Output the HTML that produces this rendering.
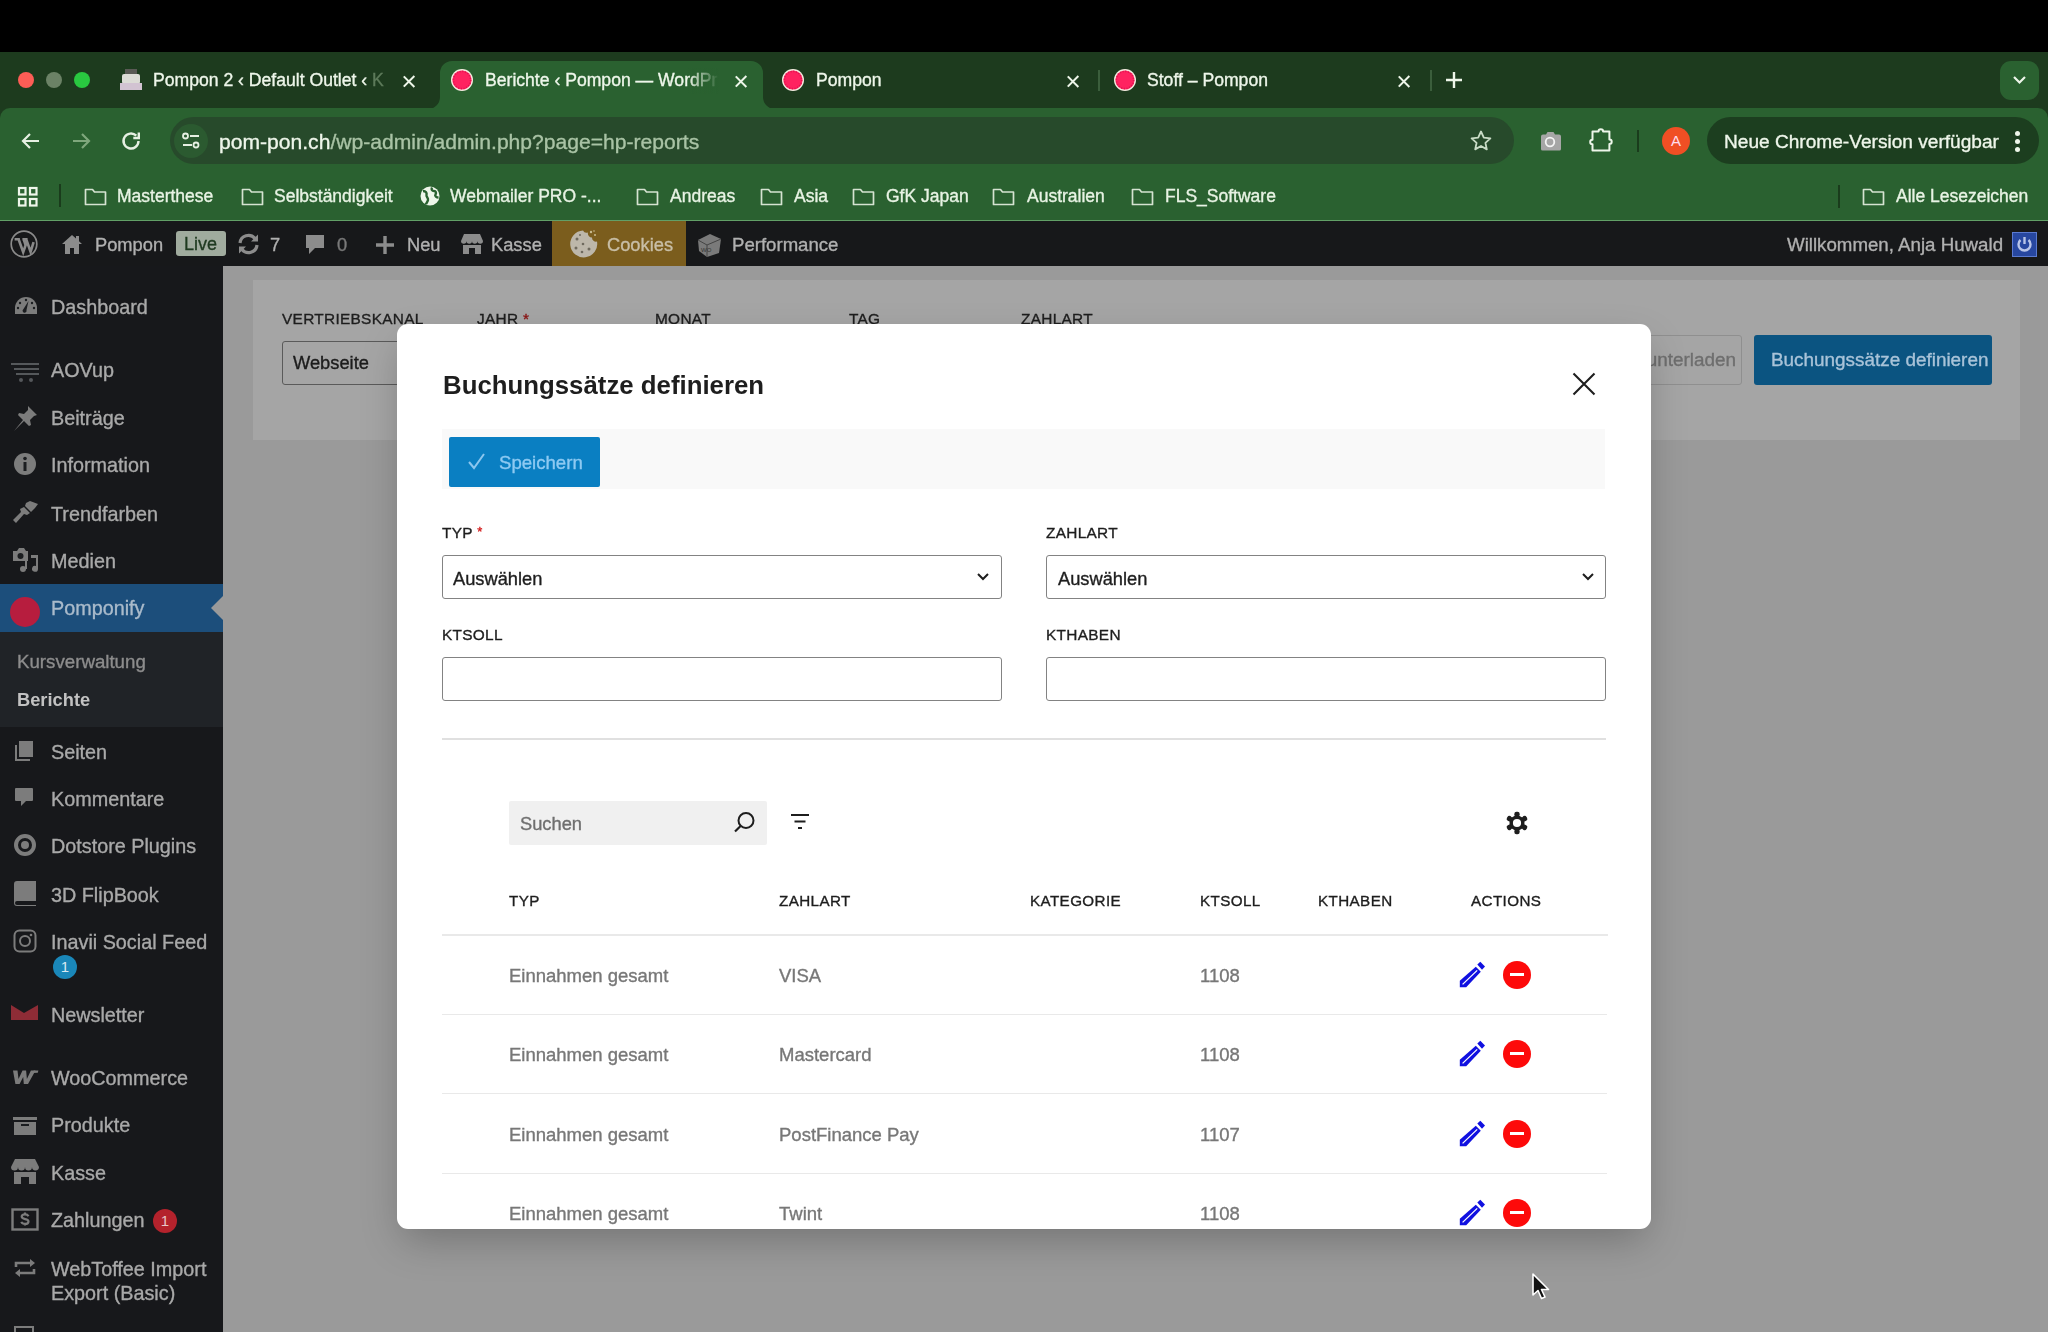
<!DOCTYPE html>
<html><head><meta charset="utf-8">
<style>
*{margin:0;padding:0;box-sizing:border-box}
html,body{width:2048px;height:1332px;overflow:hidden;background:#000;font-family:"Liberation Sans",sans-serif}
.a{position:absolute}
.t{position:absolute;white-space:nowrap;line-height:1;will-change:transform;-webkit-text-stroke:0.35px currentColor}
#topbar{left:0;top:0;width:2048px;height:52px;background:#000}
#tabs{left:0;top:52px;width:2048px;height:75px;background:#1d3b1e}
#toolbar{left:0;top:108px;width:2048px;height:112px;background:#2a6130;border-radius:10px 10px 0 0}
#bmline{left:0;top:219.5px;width:2048px;height:1.5px;background:#62a067}
#adminbar{left:0;top:221px;width:2048px;height:45px;background:#17181a}
#sidebar{left:0;top:266px;width:223px;height:1066px;background:#17181b}
#content{left:223px;top:266px;width:1825px;height:1066px;background:#9a9a9a}
.dot{position:absolute;width:16px;height:16px;border-radius:50%}
.tabtxt{color:#eef6ea;font-size:17.6px}
.close{position:absolute;width:12px;height:12px}
.close:before,.close:after{content:"";position:absolute;left:4.8px;top:-1.5px;width:2.4px;height:15px;background:#eef6ea;transform:rotate(45deg)}
.close:after{transform:rotate(-45deg)}
.fav{position:absolute;width:22px;height:22px;border-radius:50%;background:#ee2d55;border:2px solid #f7d2da}
.ab{color:#b0b0b0;font-size:18.3px}
.sb{color:#a9a9a9;font-size:19.8px}
.lbl{font-size:15.4px;color:#1e1e1e;letter-spacing:0.3px}
.sel{border:1.8px solid #838383;border-radius:3px;background:#fff}
.th{font-size:15.2px;color:#1e1e1e;letter-spacing:0.4px}
.td{font-size:18.5px;color:#777}
.bm{color:#e8f3e4;font-size:17.5px}
.folder{position:absolute;width:20px;height:16px;border:1.6px solid #d9e6d5;border-radius:2px}
.folder:before{content:"";position:absolute;left:-1.6px;top:-5px;width:8px;height:5px;border:1.6px solid #d9e6d5;border-bottom:none;border-radius:2px 2px 0 0}
</style></head><body>
<div id="topbar" class="a"></div>
<div id="tabs" class="a"></div>
<!-- traffic lights -->
<div class="dot" style="left:18px;top:72px;background:#fd5d56"></div>
<div class="dot" style="left:46px;top:72px;background:#6b8266"></div>
<div class="dot" style="left:74px;top:72px;background:#29c840"></div>
<!-- tab 1 -->
<div class="a" style="left:120px;top:69px;width:22px;height:22px">
 <div class="a" style="left:5px;top:0;width:12px;height:6px;background:#5a5a55"></div>
 <div class="a" style="left:2px;top:5px;width:18px;height:10px;background:#dcdcd6;border-radius:2px"></div>
 <div class="a" style="left:0;top:14px;width:22px;height:7px;background:#d2c3d2"></div>
</div>
<div class="t tabtxt" style="left:153px;top:72px">Pompon 2 ‹ Default Outlet ‹ <span style="color:#5d7a5a">K</span></div>
<div class="close" style="left:403px;top:75px"></div>
<!-- active tab -->
<svg class="a" style="left:428px;top:61px" width="347" height="48" viewBox="0 0 347 48"><path d="M0 48a12 12 0 0 0 12-12V12A12 12 0 0 1 24 0h299a12 12 0 0 1 12 12v24a12 12 0 0 0 12 12z" fill="#2a6130"/></svg>
<svg class="a" style="left:450px;top:68px" width="24" height="24" viewBox="0 0 24 24"><circle cx="12" cy="12" r="11" fill="#f5ebe0"/><circle cx="12" cy="12" r="9.6" fill="#ff2260"/><circle cx="12" cy="12" r="8.6" fill="none" stroke="#e01550" stroke-width="1.6" stroke-dasharray="1.2 1.5"/></svg>
<div class="t tabtxt" style="left:485px;top:72px">Berichte ‹ Pompon — WordPr</div>
<div class="a" style="left:688px;top:68px;width:36px;height:26px;background:linear-gradient(to right,rgba(42,97,48,0),#2a6130 85%)"></div>
<div class="close" style="left:735px;top:75px"></div>
<!-- tab 3 -->
<svg class="a" style="left:781px;top:68px" width="24" height="24" viewBox="0 0 24 24"><circle cx="12" cy="12" r="11" fill="#f5ebe0"/><circle cx="12" cy="12" r="9.6" fill="#ff2260"/><circle cx="12" cy="12" r="8.6" fill="none" stroke="#e01550" stroke-width="1.6" stroke-dasharray="1.2 1.5"/></svg>
<div class="t tabtxt" style="left:816px;top:72px">Pompon</div>
<div class="close" style="left:1067px;top:75px"></div>
<div class="a" style="left:1098px;top:70px;width:2px;height:21px;background:#3b5e3c"></div>
<!-- tab 4 -->
<svg class="a" style="left:1113px;top:68px" width="24" height="24" viewBox="0 0 24 24"><circle cx="12" cy="12" r="11" fill="#f5ebe0"/><circle cx="12" cy="12" r="9.6" fill="#ff2260"/><circle cx="12" cy="12" r="8.6" fill="none" stroke="#e01550" stroke-width="1.6" stroke-dasharray="1.2 1.5"/></svg>
<div class="t tabtxt" style="left:1147px;top:72px">Stoff – Pompon</div>
<div class="close" style="left:1398px;top:75px"></div>
<div class="a" style="left:1430px;top:70px;width:2px;height:21px;background:#3b5e3c"></div>
<svg class="a" style="left:1445px;top:71px" width="18" height="18" viewBox="0 0 18 18"><path d="M9 1v16M1 9h16" stroke="#eef6ea" stroke-width="2.4"/></svg>
<div class="a" style="left:2000px;top:61px;width:39px;height:39px;border-radius:11px;background:#2a6130"></div><svg class="a" style="left:2012px;top:75px" width="15" height="10" viewBox="0 0 15 10"><path d="M2 2l5.5 5.5L13 2" fill="none" stroke="#eef6ea" stroke-width="2.2"/></svg>


<div id="toolbar" class="a"></div>
<div id="bmline" class="a"></div>
<!-- nav icons -->
<svg class="a" style="left:19px;top:129px" width="24" height="24" viewBox="0 0 24 24"><path d="M20 12H5M11 5l-7 7 7 7" fill="none" stroke="#e6f0e2" stroke-width="2.2"/></svg>
<svg class="a" style="left:69px;top:129px" width="24" height="24" viewBox="0 0 24 24"><path d="M4 12h15M13 5l7 7-7 7" fill="none" stroke="#7fa77c" stroke-width="2.2"/></svg>
<svg class="a" style="left:119px;top:129px" width="24" height="24" viewBox="0 0 24 24"><path d="M19.5 12a7.5 7.5 0 1 1-2.2-5.3" fill="none" stroke="#e6f0e2" stroke-width="2.4"/><path d="M19.8 3.5v5.5h-5.5" fill="none" stroke="#e6f0e2" stroke-width="2.4"/></svg>
<!-- url pill -->
<div class="a" style="left:170px;top:117px;width:1344px;height:47px;border-radius:24px;background:#274a2b"></div>
<div class="a" style="left:174px;top:124px;width:34px;height:34px;border-radius:50%;background:#2b5a30"></div>
<svg class="a" style="left:180px;top:130px" width="22" height="22" viewBox="0 0 22 22"><circle cx="5.5" cy="6" r="2.5" fill="none" stroke="#e6f0e2" stroke-width="1.8"/><path d="M10 6h9M3 15h9" stroke="#e6f0e2" stroke-width="1.8"/><circle cx="16" cy="15" r="2.5" fill="none" stroke="#e6f0e2" stroke-width="1.8"/></svg>
<div class="t" style="left:219px;top:131px;font-size:21.1px;color:#eef6ea">pom-pon.ch<span style="color:#a9c3a5">/wp-admin/admin.php?page=hp-reports</span></div>
<svg class="a" style="left:1469px;top:129px" width="24" height="24" viewBox="0 0 24 24"><path d="M12 2.5l2.8 6.1 6.6.7-5 4.5 1.4 6.6L12 17l-5.8 3.4 1.4-6.6-5-4.5 6.6-.7z" fill="none" stroke="#c9dcc6" stroke-width="1.8" stroke-linejoin="round"/></svg>
<!-- camera -->
<svg class="a" style="left:1540px;top:131px" width="22" height="20" viewBox="0 0 22 20"><path d="M1 5.5a2 2 0 0 1 2-2h3l1.5-2.5h6L15 3.5h4a2 2 0 0 1 2 2V18a1.5 1.5 0 0 1-1.5 1.5h-17A1.5 1.5 0 0 1 1 18z" fill="#a6a6a6"/><circle cx="10" cy="11" r="4.3" fill="none" stroke="#f4f4f4" stroke-width="1.8"/></svg>
<!-- puzzle -->
<svg class="a" style="left:1589px;top:127px" width="26" height="26" viewBox="0 0 26 26"><path d="M3.5 4.5h6a2.3 2.3 0 0 1 4.6 0h6.3v8a2.3 2.3 0 0 1 0 4.6v6.4H3.5v-6.2a2.3 2.3 0 0 1 0-4.6z" fill="none" stroke="#eef6ea" stroke-width="2" stroke-linejoin="round"/></svg>
<div class="a" style="left:1637px;top:130px;width:2px;height:22px;background:#1a3c1c"></div>
<div class="a" style="left:1662px;top:127px;width:28px;height:28px;border-radius:50%;background:#f04f24;color:#fde;font-size:15px;text-align:center;line-height:28px">A</div>
<div class="a" style="left:1707px;top:117px;width:332px;height:47px;border-radius:24px;background:#1c3e1f"></div>
<div class="t" style="left:1724px;top:132px;font-size:19.1px;color:#eef6ea">Neue Chrome-Version verfügbar</div>
<div class="a" style="left:2015px;top:131px;width:5px;height:5px;border-radius:50%;background:#eef6ea;box-shadow:0 8px 0 #eef6ea,0 16px 0 #eef6ea"></div>
<!-- bookmarks -->
<svg class="a" style="left:17px;top:186px" width="22" height="22" viewBox="0 0 22 22"><g fill="none" stroke="#eef6ea" stroke-width="2.2"><rect x="2" y="2" width="6.5" height="6.5"/><rect x="13" y="2" width="6.5" height="6.5"/><rect x="2" y="13" width="6.5" height="6.5"/><rect x="13" y="13" width="6.5" height="6.5"/></g></svg>
<div class="a" style="left:59px;top:184px;width:2px;height:23px;background:#1a3c1c"></div>
<svg class="a" style="left:84px;top:187px" width="23" height="19" viewBox="0 0 23 19"><path d="M1.5 2.5h7l2 2.5h11v12.5h-20z" fill="none" stroke="#d5e3d1" stroke-width="1.7" stroke-linejoin="round"/></svg>
<div class="t bm" style="left:117px;top:188px">Masterthese</div>
<svg class="a" style="left:241px;top:187px" width="23" height="19" viewBox="0 0 23 19"><path d="M1.5 2.5h7l2 2.5h11v12.5h-20z" fill="none" stroke="#d5e3d1" stroke-width="1.7" stroke-linejoin="round"/></svg>
<div class="t bm" style="left:274px;top:188px">Selbständigkeit</div>
<svg class="a" style="left:636px;top:187px" width="23" height="19" viewBox="0 0 23 19"><path d="M1.5 2.5h7l2 2.5h11v12.5h-20z" fill="none" stroke="#d5e3d1" stroke-width="1.7" stroke-linejoin="round"/></svg>
<div class="t bm" style="left:670px;top:188px">Andreas</div>
<svg class="a" style="left:760px;top:187px" width="23" height="19" viewBox="0 0 23 19"><path d="M1.5 2.5h7l2 2.5h11v12.5h-20z" fill="none" stroke="#d5e3d1" stroke-width="1.7" stroke-linejoin="round"/></svg>
<div class="t bm" style="left:794px;top:188px">Asia</div>
<svg class="a" style="left:852px;top:187px" width="23" height="19" viewBox="0 0 23 19"><path d="M1.5 2.5h7l2 2.5h11v12.5h-20z" fill="none" stroke="#d5e3d1" stroke-width="1.7" stroke-linejoin="round"/></svg>
<div class="t bm" style="left:886px;top:188px">GfK Japan</div>
<svg class="a" style="left:992px;top:187px" width="23" height="19" viewBox="0 0 23 19"><path d="M1.5 2.5h7l2 2.5h11v12.5h-20z" fill="none" stroke="#d5e3d1" stroke-width="1.7" stroke-linejoin="round"/></svg>
<div class="t bm" style="left:1027px;top:188px">Australien</div>
<svg class="a" style="left:1131px;top:187px" width="23" height="19" viewBox="0 0 23 19"><path d="M1.5 2.5h7l2 2.5h11v12.5h-20z" fill="none" stroke="#d5e3d1" stroke-width="1.7" stroke-linejoin="round"/></svg>
<div class="t bm" style="left:1165px;top:188px">FLS_Software</div>
<svg class="a" style="left:1862px;top:187px" width="23" height="19" viewBox="0 0 23 19"><path d="M1.5 2.5h7l2 2.5h11v12.5h-20z" fill="none" stroke="#d5e3d1" stroke-width="1.7" stroke-linejoin="round"/></svg>
<div class="t bm" style="left:1896px;top:188px">Alle Lesezeichen</div>
<svg class="a" style="left:419px;top:185px" width="22" height="22" viewBox="0 0 22 22"><circle cx="11" cy="11" r="9.5" fill="#eef6ea"/><path d="M4 6c3 0 4 2 3.5 4s2 2.5 1.5 5-2 3-2 4.5M13 2.5c-1 2 0 3.5 2 3.5s2.5 2 1.5 3.5 1 3 3 3" fill="none" stroke="#2a6130" stroke-width="2.4"/></svg>
<div class="t bm" style="left:450px;top:188px">Webmailer PRO -...</div>
<div class="a" style="left:1838px;top:185px;width:2px;height:23px;background:#1a3c1c"></div>


<div id="adminbar" class="a"></div>
<!-- WP logo -->
<svg class="a" style="left:10px;top:230px" width="28" height="28" viewBox="0 0 28 28"><circle cx="14" cy="14" r="12.8" fill="none" stroke="#8a8a8a" stroke-width="1.7"/><path d="M4.6 9.2h5.2M8.6 9.2l4.6 13 2.4-7-2-6M12.4 9.2h5.2M16.2 9.2l4.4 12.6 3-9.6" fill="none" stroke="#8a8a8a" stroke-width="2.6"/></svg>
<svg class="a" style="left:61px;top:233px" width="22" height="22" viewBox="0 0 22 22"><path d="M11 2L1 11h3v10h5v-6h4v6h5V11h3l-3-2.7V3h-3v2.6z" fill="#8c8c8c"/></svg>
<div class="t ab" style="left:95px;top:236px">Pompon</div>
<div class="a" style="left:176px;top:231px;width:50px;height:25px;border-radius:3px;background:#a0ab9e"></div>
<div class="t" style="left:184px;top:235px;font-size:18px;color:#1f3a20">Live</div>
<svg class="a" style="left:236px;top:232px" width="25" height="24" viewBox="0 0 25 24"><path d="M4 11a8.5 8.5 0 0 1 15-4.5M21 13a8.5 8.5 0 0 1-15 4.5" fill="none" stroke="#8c8c8c" stroke-width="3.2"/><path d="M22 2.5v7h-7zM3 21.5v-7h7z" fill="#8c8c8c"/></svg>
<div class="t ab" style="left:270px;top:236px">7</div>
<svg class="a" style="left:305px;top:234px" width="20" height="22" viewBox="0 0 20 22"><path d="M1 1h18v13h-9l-6 6v-6H1z" fill="#8c8c8c"/></svg>
<div class="t ab" style="left:337px;top:236px;color:#7a7a7a">0</div>
<svg class="a" style="left:375px;top:235px" width="20" height="20" viewBox="0 0 20 20"><path d="M10 1v18M1 10h18" stroke="#8c8c8c" stroke-width="3.4"/></svg>
<div class="t ab" style="left:407px;top:236px">Neu</div>
<svg class="a" style="left:461px;top:233px" width="22" height="22" viewBox="0 0 22 22"><path d="M3 1h16l3 7a2.7 2.7 0 0 1-5.5 0 2.7 2.7 0 0 1-5.5 0 2.7 2.7 0 0 1-5.5 0A2.7 2.7 0 0 1 0 8z" fill="#8c8c8c"/><path d="M2 12h18v9h-6v-6H8v6H2z" fill="#8c8c8c"/></svg>
<div class="t ab" style="left:491px;top:236px">Kasse</div>
<div class="a" style="left:552px;top:221px;width:134px;height:45px;background:#7b5d1d"></div>
<svg class="a" style="left:568px;top:229px" width="31" height="31" viewBox="0 0 31 31"><path d="M15 1.5a13.5 13.5 0 1 0 14 11 4 4 0 0 1-5-4 4 4 0 0 1-4-5 4 4 0 0 1-5-2z" fill="#bdb7aa"/><g fill="#6f6a5e"><circle cx="9" cy="10" r="1.5"/><circle cx="15" cy="15" r="1.3"/><circle cx="8" cy="19" r="1.5"/><circle cx="14" cy="23" r="1.3"/><circle cx="21" cy="20" r="1.5"/><circle cx="12" cy="6" r="1"/></g><g fill="#c9bb90"><circle cx="23" cy="3" r="1.2"/><circle cx="27" cy="6" r="1"/><circle cx="26" cy="2" r="0.8"/></g></svg>
<div class="t ab" style="left:607px;top:236px;color:#c8bea6">Cookies</div>
<svg class="a" style="left:696px;top:232px" width="27" height="26" viewBox="0 0 27 26"><path d="M2 8l12-6 11 5-2 14-12 4-8-6z" fill="#7a7a7a"/><path d="M2 8l9 5 14-6M11 13l0 12" fill="none" stroke="#444" stroke-width="1"/><text x="5" y="20" font-size="6" fill="#333" font-family="Liberation Sans">WO</text></svg>
<div class="t ab" style="left:732px;top:236px;font-size:18.6px">Performance</div>
<div class="t ab" style="left:1787px;top:236px;font-size:18.7px">Willkommen, Anja Huwald</div>
<div class="a" style="left:2012px;top:232px;width:25px;height:25px;background:#2747a0;border:1px solid #5a7ad0"></div>
<svg class="a" style="left:2014px;top:234px" width="21" height="21" viewBox="0 0 21 21"><path d="M6.5 6a6 6 0 1 0 8 0" fill="none" stroke="#b8c4e8" stroke-width="2.4"/><path d="M10.5 3v7" stroke="#b8c4e8" stroke-width="2.4"/></svg>
<div id="sidebar" class="a"></div>
<div class="a" style="left:0;top:584px;width:223px;height:48px;background:#1c4e7b"></div>
<div class="a" style="left:211px;top:596px;width:0;height:0;border-top:12px solid transparent;border-bottom:12px solid transparent;border-right:12px solid #9a9a9a"></div>
<div class="a" style="left:0;top:632px;width:223px;height:95px;background:#202327"></div>
<div class="a" style="left:14px;top:296px;line-height:0"><svg width="24" height="20" viewBox="0 0 24 20"><path d="M12 1A11 11 0 0 0 1 12v6h22v-6A11 11 0 0 0 12 1z" fill="#7c7c7c"/><g fill="#1b1d20"><circle cx="12" cy="4" r="1.2"/><circle cx="6" cy="7" r="1.2"/><circle cx="18" cy="7" r="1.2"/><circle cx="4" cy="12" r="1.2"/><circle cx="20" cy="12" r="1.2"/><path d="M14.5 5l-2 9a2 2 0 1 1-3-1z"/></g></svg></div>
<div class="t sb" style="left:51px;top:298px">Dashboard</div>
<div class="a" style="left:10px;top:362px;line-height:0"><svg width="30" height="22" viewBox="0 0 30 22"><g stroke="#55585b" stroke-width="2.2"><path d="M1 2h28M4 7h25M6 12h23"/></g><circle cx="11" cy="18" r="2" fill="#55585b"/><circle cx="21" cy="18" r="2" fill="#55585b"/></svg></div>
<div class="t sb" style="left:51px;top:361px">AOVup</div>
<div class="a" style="left:12px;top:405px;line-height:0"><svg width="26" height="26" viewBox="0 0 26 26"><path d="M16 1l9 9-3 1-4 4 1 5-2 1-5-5-10 10 9-11-5-5 1-2 5 1 4-4z" fill="#7c7c7c"/></svg></div>
<div class="t sb" style="left:51px;top:409px">Beiträge</div>
<div class="a" style="left:13px;top:452px;line-height:0"><svg width="24" height="24" viewBox="0 0 24 24"><circle cx="12" cy="12" r="11" fill="#7c7c7c"/><rect x="10.5" y="10" width="3" height="9" fill="#1b1d20"/><circle cx="12" cy="6.5" r="1.8" fill="#1b1d20"/></svg></div>
<div class="t sb" style="left:51px;top:456px">Information</div>
<div class="a" style="left:12px;top:500px;line-height:0"><svg width="27" height="24" viewBox="0 0 27 24"><path d="M14 3l4-2 8 3-3 4-4 4-6-6z" fill="#7c7c7c"/><path d="M12 7l6 6-3 2-3-1-8 9-3-3 8-8-1-3z" fill="#7c7c7c"/></svg></div>
<div class="t sb" style="left:51px;top:505px">Trendfarben</div>
<div class="a" style="left:12px;top:547px;line-height:0"><svg width="27" height="26" viewBox="0 0 27 26"><path d="M1 4h4l2-3h5l2 3h2v10H1z" fill="#7c7c7c"/><circle cx="8.5" cy="9" r="3" fill="#1b1d20"/><path d="M19 8h7v14a3 3 0 1 1-2-3v-8h-5z" fill="#7c7c7c"/><circle cx="11" cy="22" r="3" fill="#7c7c7c"/><path d="M13 22v-8h2v8z" fill="#7c7c7c"/></svg></div>
<div class="t sb" style="left:51px;top:552px">Medien</div>
<div class="a" style="left:10px;top:597px;width:30px;height:30px;border-radius:50%;background:#b71d3e"></div>
<div class="t sb" style="left:51px;top:599px;color:#aabbcb">Pomponify</div>
<div class="t" style="left:17px;top:653px;font-size:18.7px;color:#8d8d8d">Kursverwaltung</div>
<div class="t" style="left:17px;top:691px;font-size:18.3px;font-weight:700;color:#c2c2c2;-webkit-text-stroke:0">Berichte</div>
<div class="a" style="left:14px;top:740px;line-height:0"><svg width="20" height="22" viewBox="0 0 20 22"><path d="M5 1h14v16H5z" fill="#7c7c7c"/><path d="M1 5h2v14h13v2H1z" fill="#7c7c7c"/></svg></div>
<div class="t sb" style="left:51px;top:743px">Seiten</div>
<div class="a" style="left:14px;top:787px;line-height:0"><svg width="20" height="22" viewBox="0 0 20 22"><path d="M2 1h16a1 1 0 0 1 1 1v11a1 1 0 0 1-1 1h-6l-5 5v-5H2a1 1 0 0 1-1-1V2a1 1 0 0 1 1-1z" fill="#7c7c7c"/></svg></div>
<div class="t sb" style="left:51px;top:790px">Kommentare</div>
<div class="a" style="left:13px;top:833px;line-height:0"><svg width="24" height="24" viewBox="0 0 24 24"><circle cx="12" cy="12" r="9" fill="none" stroke="#7c7c7c" stroke-width="4"/><circle cx="12" cy="12" r="4" fill="#7c7c7c"/></svg></div>
<div class="t sb" style="left:51px;top:837px">Dotstore Plugins</div>
<div class="a" style="left:13px;top:880px;line-height:0"><svg width="24" height="26" viewBox="0 0 24 26"><path d="M4 1h19v20H4a2 2 0 0 0 0 4h19v1H4a3 3 0 0 1-3-3V4a3 3 0 0 1 3-3z" fill="#7c7c7c"/></svg></div>
<div class="t sb" style="left:51px;top:886px">3D FlipBook</div>
<div class="a" style="left:13px;top:929px;line-height:0"><svg width="24" height="24" viewBox="0 0 24 24"><rect x="1.5" y="1.5" width="21" height="21" rx="5" fill="none" stroke="#7c7c7c" stroke-width="2"/><circle cx="12" cy="12" r="5" fill="none" stroke="#7c7c7c" stroke-width="2"/><circle cx="18" cy="6" r="1.3" fill="#7c7c7c"/></svg></div>
<div class="t sb" style="left:51px;top:933px">Inavii Social Feed</div>
<div class="a" style="left:11px;top:1004px;line-height:0"><svg width="27" height="16" viewBox="0 0 27 16"><path d="M0 1l13 8 14-8v15H0z" fill="#8e2c36"/></svg></div>
<div class="t sb" style="left:51px;top:1006px">Newsletter</div>
<div class="a" style="left:11px;top:1068px;line-height:0"><svg width="29" height="18" viewBox="0 0 29 18"><path d="M2 2.5h4.5l1 8.5 4-8.5h3.6l0.8 8.5 4-8.5h4.6L17 16h-4.2l-0.6-7-3.6 7H4.4z" fill="#7c7c7c"/><path d="M22.6 2.5h4.8l-0.6 2.2-4.6 0.4z" fill="#7c7c7c"/></svg></div>
<div class="t sb" style="left:51px;top:1069px">WooCommerce</div>
<div class="a" style="left:12px;top:1116px;line-height:0"><svg width="26" height="20" viewBox="0 0 26 20"><rect x="1" y="1" width="24" height="3" fill="#7c7c7c"/><path d="M2 6h22v13H2z" fill="#7c7c7c"/><rect x="9" y="8" width="8" height="2" fill="#1b1d20"/></svg></div>
<div class="t sb" style="left:51px;top:1116px">Produkte</div>
<div class="a" style="left:11px;top:1158px;line-height:0"><svg width="28" height="26" viewBox="0 0 28 26"><path d="M4 1h20l4 8a3.5 3.5 0 0 1-7 0 3.5 3.5 0 0 1-7 0 3.5 3.5 0 0 1-7 0A3.5 3.5 0 0 1 0 9z" fill="#7c7c7c"/><path d="M3 14h22v12h-7v-7h-8v7H3z" fill="#7c7c7c"/></svg></div>
<div class="t sb" style="left:51px;top:1164px">Kasse</div>
<div class="a" style="left:11px;top:1208px;line-height:0"><svg width="28" height="23" viewBox="0 0 28 23"><rect x="1.5" y="1.5" width="25" height="20" fill="none" stroke="#7c7c7c" stroke-width="2.4"/><path d="M17.5 8.2c-.6-1.2-1.8-1.8-3.5-1.8-2 0-3.3 1-3.3 2.4 0 3 6.8 1.6 6.8 4.6 0 1.5-1.4 2.5-3.5 2.5-1.8 0-3.1-.7-3.7-2M14 4.5v2M14 15.5v2" fill="none" stroke="#7c7c7c" stroke-width="2.2"/></svg></div>
<div class="t sb" style="left:51px;top:1211px">Zahlungen</div>
<div class="a" style="left:13px;top:1258px;line-height:0"><svg width="24" height="20" viewBox="0 0 24 20"><path d="M3 9V5h15" fill="none" stroke="#7c7c7c" stroke-width="2.6"/><path d="M17 1l5 4-5 4z" fill="#7c7c7c"/><path d="M21 11v4H6" fill="none" stroke="#7c7c7c" stroke-width="2.6"/><path d="M7 11l-5 4 5 4z" fill="#7c7c7c"/></svg></div>
<div class="t sb" style="left:51px;top:1260px">WebToffee Import</div>
<div class="t sb" style="left:51px;top:1284px">Export (Basic)</div>
<div class="a" style="left:53px;top:955px;width:24px;height:24px;border-radius:50%;background:#1a87b9;color:#d7e9f2;font-size:15px;line-height:24px;text-align:center">1</div>
<div class="a" style="left:153px;top:1209px;width:24px;height:24px;border-radius:50%;background:#b4222c;color:#e8c6c8;font-size:15px;line-height:24px;text-align:center">1</div>
<div class="a" style="left:14px;top:1326px;width:20px;height:8px;border:2px solid #7c7c7c;border-bottom:none"></div>

<div id="content" class="a"></div>
<!-- background panel -->
<div class="a" style="left:253px;top:280px;width:1767px;height:160px;background:#a5a5a5"></div>
<div class="t lbl" style="left:282px;top:311px;color:#1e1e1e">VERTRIEBSKANAL</div>
<div class="t lbl" style="left:477px;top:311px;color:#1e1e1e">JAHR <span style="color:#8a1010">*</span></div>
<div class="t lbl" style="left:655px;top:311px;color:#1e1e1e">MONAT</div>
<div class="t lbl" style="left:849px;top:311px;color:#1e1e1e">TAG</div>
<div class="t lbl" style="left:1021px;top:311px;color:#1e1e1e">ZAHLART</div>
<div class="a" style="left:282px;top:341px;width:140px;height:44px;border:1.5px solid #5a5a5a;border-radius:3px"></div>
<div class="t" style="left:293px;top:354px;font-size:18.3px;color:#1c1c1c">Webseite</div>
<div class="a" style="left:1560px;top:335px;width:182px;height:50px;border:1.5px solid #8f8f8f;border-radius:3px"></div>
<div class="t" style="left:1560px;top:351px;width:176px;text-align:right;font-size:18.9px;color:#6e6e6e">herunterladen</div>
<div class="a" style="left:1754px;top:335px;width:238px;height:50px;background:#0b5481;border-radius:3px"></div>
<div class="t" style="left:1771px;top:351px;font-size:18.9px;color:#a9c3d8">Buchungssätze definieren</div>
<!-- modal -->
<div class="a" style="left:397px;top:324px;width:1254px;height:905px;background:#fff;border-radius:11px;box-shadow:0 16px 40px -6px rgba(0,0,0,0.26)"></div>
<div class="t" style="left:443px;top:373px;font-size:25.8px;font-weight:700;color:#1e1e1e;-webkit-text-stroke:0">Buchungssätze definieren</div>
<svg class="a" style="left:1572px;top:372px" width="24" height="24" viewBox="0 0 24 24"><path d="M1.5 1.5l21 21M22.5 1.5l-21 21" stroke="#1e1e1e" stroke-width="2.1"/></svg>
<div class="a" style="left:442px;top:429px;width:1163px;height:60px;background:#f9f9f9"></div>
<div class="a" style="left:449px;top:437px;width:151px;height:50px;background:#0a7fc2;border-radius:2px"></div>
<svg class="a" style="left:467px;top:452px" width="19" height="19" viewBox="0 0 19 19"><path d="M2 10l5 6L17 2" fill="none" stroke="#8cc6ee" stroke-width="2"/></svg>
<div class="t" style="left:499px;top:454px;font-size:18.6px;color:#8ecaf2">Speichern</div>
<div class="t lbl" style="left:442px;top:525px">TYP <span style="color:#d21a1a;font-size:13px;vertical-align:2px">*</span></div>
<div class="t lbl" style="left:1046px;top:525px">ZAHLART</div>
<div class="a sel" style="left:442px;top:555px;width:560px;height:44px"></div>
<div class="a sel" style="left:1046px;top:555px;width:560px;height:44px"></div>
<div class="t" style="left:453px;top:569.5px;font-size:18.3px;color:#1e1e1e">Auswählen</div>
<div class="t" style="left:1058px;top:569.5px;font-size:18.3px;color:#1e1e1e">Auswählen</div>
<svg class="a" style="left:976px;top:572px" width="14" height="9" viewBox="0 0 14 9"><path d="M2 2l5 5 5-5" fill="none" stroke="#1e1e1e" stroke-width="2"/></svg>
<svg class="a" style="left:1581px;top:572px" width="14" height="9" viewBox="0 0 14 9"><path d="M2 2l5 5 5-5" fill="none" stroke="#1e1e1e" stroke-width="2"/></svg>
<div class="t lbl" style="left:442px;top:627px">KTSOLL</div>
<div class="t lbl" style="left:1046px;top:627px">KTHABEN</div>
<div class="a sel" style="left:442px;top:657px;width:560px;height:44px"></div>
<div class="a sel" style="left:1046px;top:657px;width:560px;height:44px"></div>
<div class="a" style="left:442px;top:738px;width:1164px;height:2px;background:#e0e0e0"></div>
<!-- search -->
<div class="a" style="left:509px;top:801px;width:258px;height:44px;background:#f0f0f0;border-radius:2px"></div>
<div class="t" style="left:520px;top:815px;font-size:18.3px;color:#6f6f6f">Suchen</div>
<svg class="a" style="left:732px;top:810px" width="25" height="25" viewBox="0 0 25 25"><circle cx="14" cy="10.5" r="7.5" fill="none" stroke="#1e1e1e" stroke-width="2"/><path d="M8.6 16L3 21.5" stroke="#1e1e1e" stroke-width="2.2"/></svg>
<svg class="a" style="left:789px;top:813px" width="22" height="19" viewBox="0 0 22 19"><path d="M2 2h18M5.5 8.5h11M9 15h4" stroke="#1e1e1e" stroke-width="2.2"/></svg>
<svg class="a" style="left:1505px;top:810.5px" width="24" height="24" viewBox="-12 -12 24 24"><g fill="#1e1e1e"><path fill-rule="evenodd" d="M0-8.6L7.45-4.3V4.3L0 8.6-7.45 4.3V-4.3z M4.1 0A4.1 4.1 0 1 0-4.1 0 4.1 4.1 0 1 0 4.1 0z"/><rect x="-2.7" y="-11.3" width="5.4" height="5" rx="2.2"/><rect x="-2.7" y="-11.3" width="5.4" height="5" rx="2.2" transform="rotate(60)"/><rect x="-2.7" y="-11.3" width="5.4" height="5" rx="2.2" transform="rotate(120)"/><rect x="-2.7" y="-11.3" width="5.4" height="5" rx="2.2" transform="rotate(180)"/><rect x="-2.7" y="-11.3" width="5.4" height="5" rx="2.2" transform="rotate(240)"/><rect x="-2.7" y="-11.3" width="5.4" height="5" rx="2.2" transform="rotate(300)"/></g></svg>
<!-- table header -->
<div class="t th" style="left:509px;top:893px">TYP</div>
<div class="t th" style="left:779px;top:893px">ZAHLART</div>
<div class="t th" style="left:1030px;top:893px">KATEGORIE</div>
<div class="t th" style="left:1200px;top:893px">KTSOLL</div>
<div class="t th" style="left:1318px;top:893px">KTHABEN</div>
<div class="t th" style="left:1471px;top:893px">ACTIONS</div>
<div class="a" style="left:442px;top:934px;width:1166px;height:1.5px;background:#e9e9e9"></div>
<div class="t td" style="left:509px;top:967px">Einnahmen gesamt</div>
<div class="t td" style="left:779px;top:967px">VISA</div>
<div class="t td" style="left:1200px;top:967px">1108</div>
<svg class="a" style="left:1458px;top:960px" width="28" height="29" viewBox="0 0 28 29"><path d="M19.3 4.5l3-2.7 4.7 4.8-3 3.1z" fill="#1010e0"/><path d="M1.8 20.8L17.8 6.8l5 5L8.2 27.2H1.8z" fill="#1010e0"/><path d="M4.6 24.4L19.2 10.4" stroke="#fff" stroke-width="1.3"/></svg>
<div class="a" style="left:1503px;top:961px;width:28px;height:28px;border-radius:50%;background:#fd0a0a"></div>
<div class="a" style="left:1510px;top:973px;width:14px;height:3.4px;background:#fff"></div>
<div class="a" style="left:442px;top:1014px;width:1165px;height:1px;background:#e9e9e9"></div>
<div class="t td" style="left:509px;top:1046px">Einnahmen gesamt</div>
<div class="t td" style="left:779px;top:1046px">Mastercard</div>
<div class="t td" style="left:1200px;top:1046px">1108</div>
<svg class="a" style="left:1458px;top:1039px" width="28" height="29" viewBox="0 0 28 29"><path d="M19.3 4.5l3-2.7 4.7 4.8-3 3.1z" fill="#1010e0"/><path d="M1.8 20.8L17.8 6.8l5 5L8.2 27.2H1.8z" fill="#1010e0"/><path d="M4.6 24.4L19.2 10.4" stroke="#fff" stroke-width="1.3"/></svg>
<div class="a" style="left:1503px;top:1040px;width:28px;height:28px;border-radius:50%;background:#fd0a0a"></div>
<div class="a" style="left:1510px;top:1052px;width:14px;height:3.4px;background:#fff"></div>
<div class="a" style="left:442px;top:1093px;width:1165px;height:1px;background:#e9e9e9"></div>
<div class="t td" style="left:509px;top:1126px">Einnahmen gesamt</div>
<div class="t td" style="left:779px;top:1126px">PostFinance Pay</div>
<div class="t td" style="left:1200px;top:1126px">1107</div>
<svg class="a" style="left:1458px;top:1119px" width="28" height="29" viewBox="0 0 28 29"><path d="M19.3 4.5l3-2.7 4.7 4.8-3 3.1z" fill="#1010e0"/><path d="M1.8 20.8L17.8 6.8l5 5L8.2 27.2H1.8z" fill="#1010e0"/><path d="M4.6 24.4L19.2 10.4" stroke="#fff" stroke-width="1.3"/></svg>
<div class="a" style="left:1503px;top:1120px;width:28px;height:28px;border-radius:50%;background:#fd0a0a"></div>
<div class="a" style="left:1510px;top:1132px;width:14px;height:3.4px;background:#fff"></div>
<div class="a" style="left:442px;top:1173px;width:1165px;height:1px;background:#e9e9e9"></div>
<div class="t td" style="left:509px;top:1205px">Einnahmen gesamt</div>
<div class="t td" style="left:779px;top:1205px">Twint</div>
<div class="t td" style="left:1200px;top:1205px">1108</div>
<svg class="a" style="left:1458px;top:1198px" width="28" height="29" viewBox="0 0 28 29"><path d="M19.3 4.5l3-2.7 4.7 4.8-3 3.1z" fill="#1010e0"/><path d="M1.8 20.8L17.8 6.8l5 5L8.2 27.2H1.8z" fill="#1010e0"/><path d="M4.6 24.4L19.2 10.4" stroke="#fff" stroke-width="1.3"/></svg>
<div class="a" style="left:1503px;top:1199px;width:28px;height:28px;border-radius:50%;background:#fd0a0a"></div>
<div class="a" style="left:1510px;top:1211px;width:14px;height:3.4px;background:#fff"></div>
<!-- cursor -->
<svg class="a" style="left:1530px;top:1272px" width="24" height="30" viewBox="0 0 24 30"><path d="M3 2v21l5-4.5 3.5 8 3.5-1.5-3.5-7.5h7z" fill="#111" stroke="#fff" stroke-width="1.6" stroke-linejoin="round"/></svg>
</body></html>
